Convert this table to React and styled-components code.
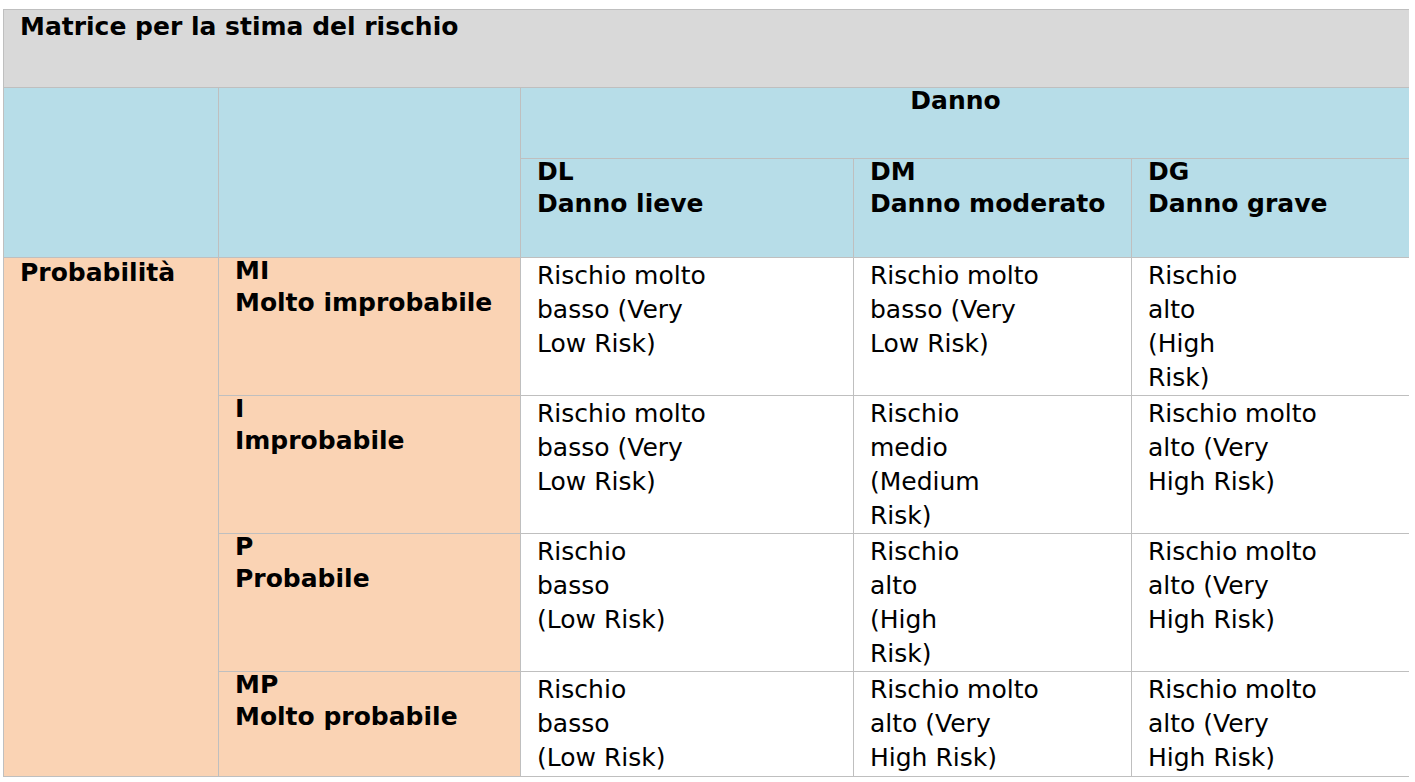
import styled, { createGlobalStyle } from 'styled-components';

const GlobalStyle = createGlobalStyle`
  body {
    margin: 0;
    background: #ffffff;
    font-family: 'DejaVu Sans', 'Verdana', sans-serif;
    color: #000;
  }
`;

const Frame = styled.div`
  margin: 9px 0 0 3px;
  width: 1406px;
  height: 768px;
  overflow: hidden;
  border-bottom: 1px solid #bfbfbf;
  box-sizing: border-box;
`;

const Table = styled.table`
  border-collapse: collapse;
  table-layout: fixed;
  width: 1406px;
`;

const Cell = styled.td`
  border: 1px solid #bfbfbf;
  vertical-align: top;
  padding: ${(p) => p.$pad || '1px 6px 0 16px'};
  background: ${(p) => p.$bg || '#ffffff'};
  height: ${(p) => p.$h || 'auto'};
  text-align: ${(p) => (p.$center ? 'center' : 'left')};
  font-weight: ${(p) => (p.$bold ? 700 : 400)};
  font-size: 25px;
  line-height: ${(p) => (p.$bold ? '32px' : '34px')};
  white-space: nowrap;
  box-sizing: border-box;
`;

const Label = styled.div`
  margin-top: ${(p) => p.$shift || '-3px'};
`;

const GRAY = '#d9d9d9';
const BLUE = '#b7dde8';
const PEACH = '#fad3b4';

const damages = [
  { code: 'DL', label: 'Danno lieve' },
  { code: 'DM', label: 'Danno moderato' },
  { code: 'DG', label: 'Danno grave' },
];

const rows = [
  {
    code: 'MI',
    label: 'Molto improbabile',
    cells: [
      ['Rischio molto', 'basso (Very', 'Low Risk)'],
      ['Rischio molto', 'basso (Very', 'Low Risk)'],
      ['Rischio', 'alto', '(High', 'Risk)'],
    ],
  },
  {
    code: 'I',
    label: 'Improbabile',
    cells: [
      ['Rischio molto', 'basso (Very', 'Low Risk)'],
      ['Rischio', 'medio', '(Medium', 'Risk)'],
      ['Rischio molto', 'alto (Very', 'High Risk)'],
    ],
  },
  {
    code: 'P',
    label: 'Probabile',
    cells: [
      ['Rischio', 'basso', '(Low Risk)'],
      ['Rischio', 'alto', '(High', 'Risk)'],
      ['Rischio molto', 'alto (Very', 'High Risk)'],
    ],
  },
  {
    code: 'MP',
    label: 'Molto probabile',
    cells: [
      ['Rischio', 'basso', '(Low Risk)'],
      ['Rischio molto', 'alto (Very', 'High Risk)'],
      ['Rischio molto', 'alto (Very', 'High Risk)'],
    ],
  },
];

const Lines = ({ lines }) =>
  lines.map((l, i) => (
    <span key={i}>
      {l}
      {i < lines.length - 1 && <br />}
    </span>
  ));

export default function App() {
  return (
    <>
      <GlobalStyle />
      <Frame>
        <Table>
          <colgroup>
            <col style={{ width: 215 }} />
            <col style={{ width: 302 }} />
            <col style={{ width: 333 }} />
            <col style={{ width: 278 }} />
            <col style={{ width: 278 }} />
          </colgroup>
          <tbody>
            <tr>
              <Cell colSpan={5} $bg={GRAY} $bold $h="78px" $pad="0 16px 0 16px">
                <Label $shift="1px">Matrice per la stima del rischio</Label>
              </Cell>
            </tr>
            <tr>
              <Cell rowSpan={2} $bg={BLUE} />
              <Cell rowSpan={2} $bg={BLUE} />
              <Cell colSpan={3} $bg={BLUE} $bold $center $h="71px" $pad="0 19px 0 0">
                <Label>Danno</Label>
              </Cell>
            </tr>
            <tr>
              {damages.map((d) => (
                <Cell key={d.code} $bg={BLUE} $bold $h="99px" $pad="0 6px 0 16px">
                  <Label>
                    {d.code}
                    <br />
                    {d.label}
                  </Label>
                </Cell>
              ))}
            </tr>
            {rows.map((r, ri) => (
              <tr key={r.code}>
                {ri === 0 && (
                  <Cell rowSpan={4} $bg={PEACH} $bold $pad="0 6px 0 16px">
                    <Label $shift="-1px">Probabilità</Label>
                  </Cell>
                )}
                <Cell $bg={PEACH} $bold $h="138px" $pad="0 6px 0 16px">
                  <Label>
                    {r.code}
                    <br />
                    {r.label}
                  </Label>
                </Cell>
                {r.cells.map((c, ci) => (
                  <Cell key={ci}>
                    <Lines lines={c} />
                  </Cell>
                ))}
              </tr>
            ))}
          </tbody>
        </Table>
      </Frame>
    </>
  );
}
